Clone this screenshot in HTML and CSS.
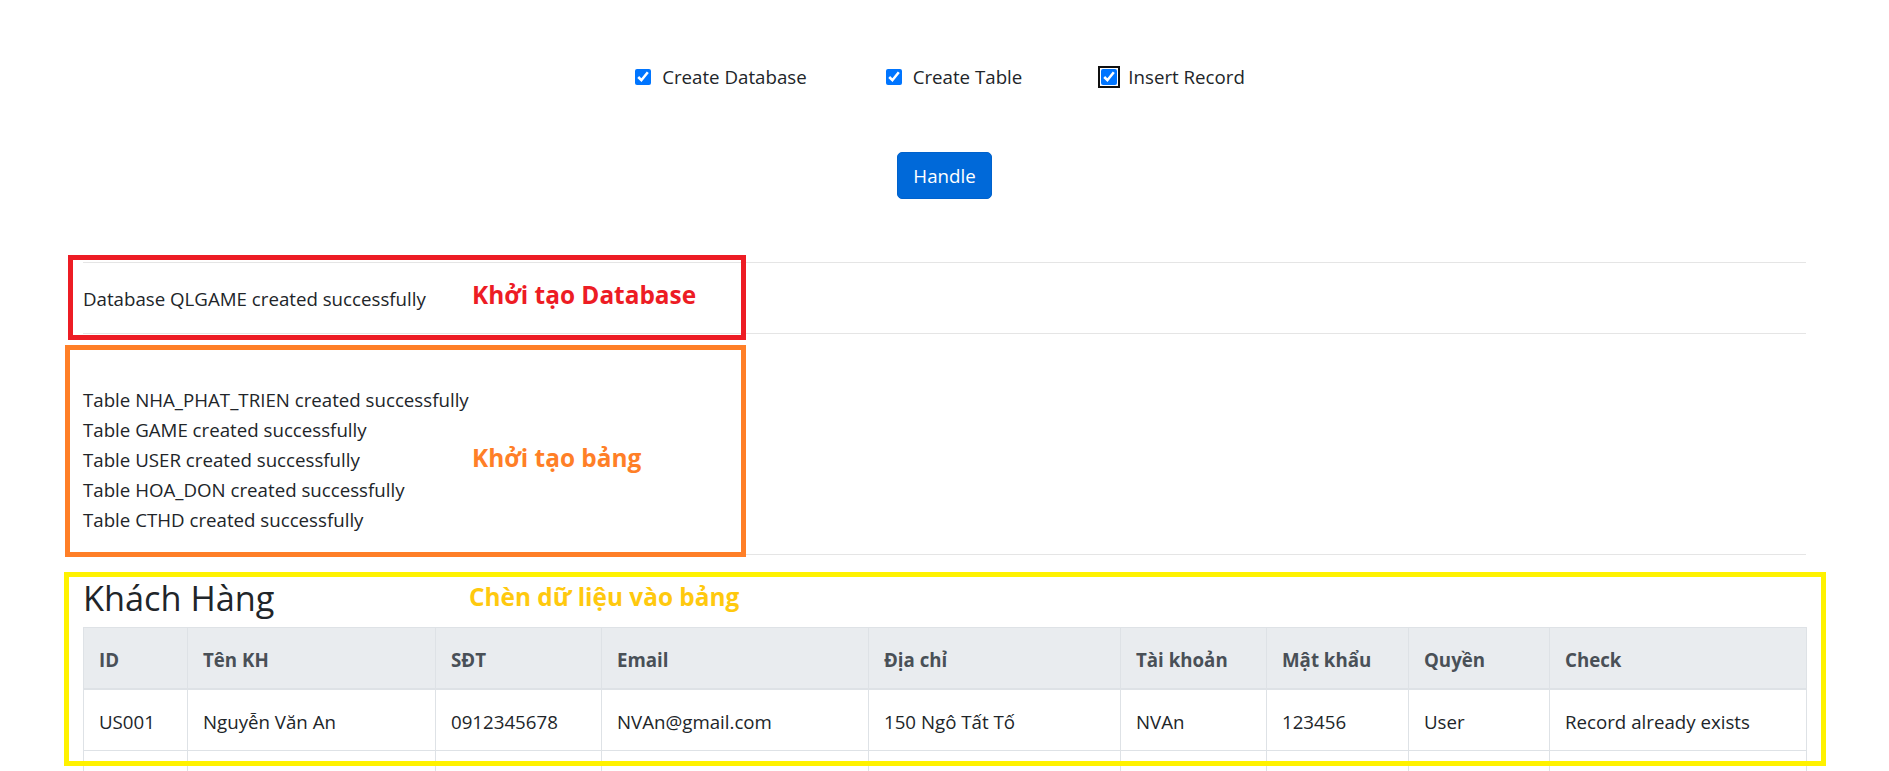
FILE: index.html
```html
<!DOCTYPE html>
<html lang="vi">
<head>
<meta charset="utf-8">
<title>QLGAME</title>
<link rel="stylesheet" href="styles.css">
</head>
<body>
<main class="page">
  <form class="options">
    <div class="opts">
      <label class="opt"><input type="checkbox" class="cb" checked><span>Create Database</span></label>
      <label class="opt"><input type="checkbox" class="cb" checked><span>Create Table</span></label>
      <label class="opt"><input type="checkbox" class="cb focused" checked><span>Insert Record</span></label>
    </div>
    <div class="actions"><button type="button" class="btn">Handle</button></div>
  </form>

  <section class="results">
    <hr class="sep">
    <p class="msg">Database QLGAME created successfully</p>
    <hr class="sep">
    <div class="msgs">
      <p class="msg">Table NHA_PHAT_TRIEN created successfully</p>
      <p class="msg">Table GAME created successfully</p>
      <p class="msg">Table USER created successfully</p>
      <p class="msg">Table HOA_DON created successfully</p>
      <p class="msg">Table CTHD created successfully</p>
    </div>
    <hr class="sep">
    <h3 class="title">Khách Hàng</h3>
    <table class="grid">
      <colgroup>
        <col class="c-id"><col class="c-name"><col class="c-phone"><col class="c-mail"><col class="c-addr">
        <col class="c-acc"><col class="c-pass"><col class="c-role"><col class="c-check">
      </colgroup>
      <thead>
        <tr><th>ID</th><th>Tên KH</th><th>SĐT</th><th>Email</th><th>Địa chỉ</th><th>Tài khoản</th><th>Mật khẩu</th><th>Quyền</th><th>Check</th></tr>
      </thead>
      <tbody>
        <tr><td>US001</td><td>Nguyễn Văn An</td><td>0912345678</td><td>NVAn@gmail.com</td><td>150 Ngô Tất Tố</td><td>NVAn</td><td>123456</td><td>User</td><td>Record already exists</td></tr>
        <tr><td>US002</td><td>Trần Thị Bình</td><td>0987654321</td><td>TTBinh@gmail.com</td><td>25 Lê Lợi</td><td>TTBinh</td><td>123456</td><td>User</td><td>Record already exists</td></tr>
      </tbody>
    </table>
  </section>

  <div class="note note-red"></div>
  <div class="note note-orange"></div>
  <div class="note note-yellow"></div>
  <span class="label label-red">Khởi tạo Database</span>
  <span class="label label-orange">Khởi tạo bảng</span>
  <span class="label label-yellow">Chèn dữ liệu vào bảng</span>
</main>
</body>
</html>
```

FILE: styles.css
```css
html, body {
  margin: 0;
  padding: 0;
  background: #fff;
}

body {
  font-family: "Open Sans", "Noto Sans", sans-serif;
  font-size: 18.7px;
  line-height: 30px;
  color: #212529;
}

.page {
  position: relative;
  padding: 0 83px;
}

.options {
  display: flex;
  flex-direction: column;
  align-items: center;
  padding-top: 62px;
}

.opts {
  display: flex;
  justify-content: center;
  gap: 64px;
  height: 30px;
  padding-left: 6px;
}

.opt {
  display: inline-flex;
  align-items: center;
  gap: 11px;
  margin-right: 15px;
}

.cb {
  width: 16px;
  height: 16px;
  margin: 0;
  accent-color: #0075ff;
}

.cb.focused {
  outline: 2px solid #101010;
  outline-offset: 1px;
  border-radius: 3px;
}

.actions {
  margin-top: 60px;
  margin-bottom: 43px;
}

.btn {
  font-family: inherit;
  font-size: 18.7px;
  line-height: 30px;
  color: #fff;
  background: #0069d9;
  border: 1px solid #0062cc;
  border-radius: 5px;
  padding: 7.5px 15px;
  height: 47px;
  width: 95px;
}

.sep {
  border: 0;
  border-top: 1px solid rgba(0, 0, 0, 0.1);
  margin: 20px 0;
  height: 0;
}

.msg {
  margin: 0;
}

.results > .msg {
  padding-top: 1px;
  margin-bottom: -1px;
}

.msgs {
  padding-top: 31px;
  margin-bottom: -1px;
}

.title {
  font-size: 34.3px;
  font-weight: 500;
  line-height: 42px;
  padding-top: 2px;
  margin: 0 0 8px;
  color: #212529;
}

.grid {
  width: 100%;
  table-layout: fixed;
  border-collapse: collapse;
}

.c-id { width: 104px; }
.c-name { width: 248px; }
.c-phone { width: 166px; }
.c-mail { width: 267px; }
.c-addr { width: 252px; }
.c-acc { width: 146px; }
.c-pass { width: 142px; }
.c-role { width: 141px; }
.c-check { width: 257px; }

.grid th,
.grid td {
  border: 1px solid #dee2e6;
  padding: 17px 15px 13px;
  text-align: left;
  vertical-align: top;
  white-space: nowrap;
  overflow: hidden;
}

.grid th {
  background: #e9ecef;
  color: #495057;
  font-weight: 700;
  border-bottom: 2px solid #dee2e6;
}

.note {
  position: absolute;
  box-sizing: border-box;
  border: 5px solid;
}

.note-red {
  left: 68px;
  top: 255px;
  width: 678px;
  height: 85px;
  border-color: #ed1c24;
}

.note-orange {
  left: 65px;
  top: 345px;
  width: 681px;
  height: 212px;
  border-color: #ff7f27;
}

.note-yellow {
  left: 64px;
  top: 572px;
  width: 1762px;
  height: 194px;
  border-color: #fff200;
}

.label {
  position: absolute;
  font-family: "Open Sans", "Noto Sans", sans-serif;
  font-weight: 700;
  font-size: 24.4px;
  line-height: 30px;
  white-space: nowrap;
}

.label-red {
  left: 472px;
  top: 280px;
  color: #ed1c24;
}

.label-orange {
  left: 472px;
  top: 443px;
  color: #ff7f27;
}

.label-yellow {
  left: 469px;
  top: 582px;
  color: #ffc90e;
}
```
